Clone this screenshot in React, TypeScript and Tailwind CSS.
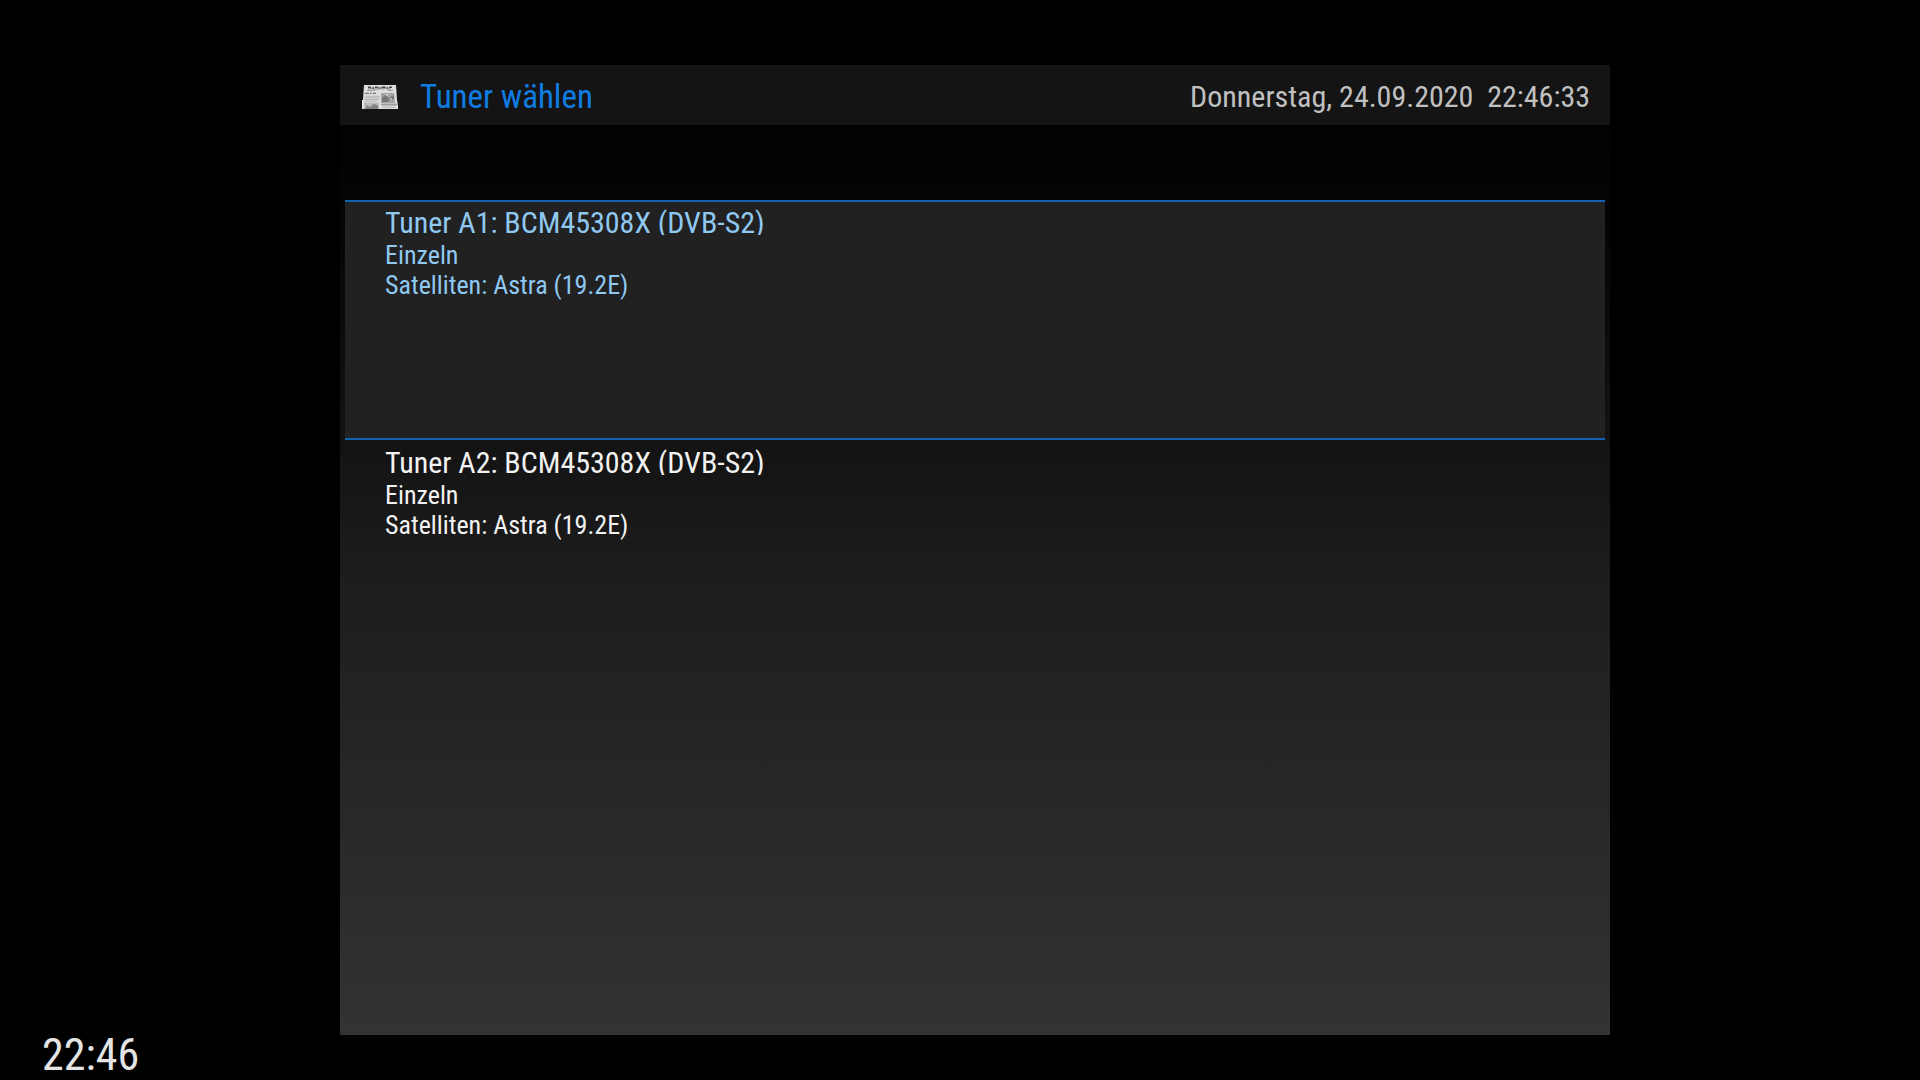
import { useState } from "react";
import clsx from "clsx";

interface Tuner {
  id: string;
  name: string;
  mode: string;
  satellites: string;
}

const TUNERS: Tuner[] = [
  {
    id: "a1",
    name: "Tuner A1: BCM45308X (DVB-S2)",
    mode: "Einzeln",
    satellites: "Satelliten: Astra (19.2E)",
  },
  {
    id: "a2",
    name: "Tuner A2: BCM45308X (DVB-S2)",
    mode: "Einzeln",
    satellites: "Satelliten: Astra (19.2E)",
  },
];

const NewspaperIcon = () => (
  <svg width="36" height="24" viewBox="0 0 36 24" aria-hidden="true">
    <path d="M2 0H34L35 15L36 24H0L0 15H1Z" fill="#dedede" />
    <path d="M0 15L1 15L0.6 23.5H0ZM35 15L36 24H35Z" fill="#f2f2f2" />
    <path
      d="M6 2.2h3M10 3h2M12.8 2.2h3M16.5 3h2M19.5 2.2h4M24.2 3h2M27 2.2h3"
      stroke="#444"
      strokeWidth="1.4"
    />
    <path d="M6 3.8h4M11 4h6M18.5 3.8h5M25 4h4" stroke="#777" />
    <path d="M5 5.6h8M26 5.6h5" stroke="#8b8b8b" strokeWidth="0.8" />
    <path d="M3 8.4h4M8 8.4h2M11 8.4h3" stroke="#777" strokeWidth="1.2" />
    <path
      d="M3 11.2h15M3 12.8h14M2 14.4h16M3 16h12M20 20.5h14M20 22.3h14"
      stroke="#aaa"
      strokeWidth="0.8"
    />
    <path d="M19 8H32L33 18H19Z" fill="#a2a2a2" />
    <path d="M20 17V13L23 10L27 13L32 10V14L28 15L25 17Z" fill="#777" />
    <path d="M22 9h6l-3 2zM26 14l4-1v2z" fill="#c8c8c8" />
    <path d="M2 17.6H17V24H2Z" fill="#bcbcbc" />
    <path d="M3 24L5 20L8 22L12 18.5L16 21V24Z" fill="#858585" />
    <path d="M19 19.2h16" stroke="#858585" />
  </svg>
);

interface TunerRowProps {
  tuner: Tuner;
  selected: boolean;
  onSelect: () => void;
}

const TunerRow = ({ tuner, selected, onSelect }: TunerRowProps) => (
  <li>
    <button
      type="button"
      aria-pressed={selected}
      onClick={onSelect}
      className={clsx(
        "flex h-60 w-full flex-col items-start border-y-2 px-10 pt-1 text-left outline-none",
        selected
          ? "border-[#1262b4] bg-[#212121] text-[#8fc8f0]"
          : "border-transparent text-[#f2f2f2]"
      )}
    >
      <span className="block h-[29px] overflow-hidden text-[30px] leading-[34px]">
        {tuner.name}
      </span>
      <span className="mt-[5px] block text-[26px] leading-[30px]">{tuner.mode}</span>
      <span className="block text-[26px] leading-[30px]">{tuner.satellites}</span>
    </button>
  </li>
);

const App = () => {
  const [selectedId, setSelectedId] = useState<string>("a1");

  return (
    <div className="grid min-h-screen grid-cols-[340px_1fr_310px] bg-black font-['Roboto_Condensed','Liberation_Sans_Narrow',Roboto,sans-serif]">
      <aside className="flex items-end pl-[42px]">
        <time className="text-[44px] leading-[50px] text-[#e4e4e4]">22:46</time>
      </aside>

      <main className="mt-[65px] mb-[45px] flex flex-col">
        <header className="flex h-[60px] items-center justify-between bg-[#141414] pt-1 pr-5 pl-[22px]">
          <div className="flex items-center gap-[22px]">
            <NewspaperIcon />
            <h1 className="text-[33px] leading-10 text-[#107ce2]">Tuner wählen</h1>
          </div>
          <time className="text-[30px] leading-10 whitespace-pre text-[#c0c0c0]">
            {"Donnerstag, 24.09.2020  22:46:33"}
          </time>
        </header>

        <div className="grow bg-linear-to-b from-[#020202] via-[#1d1d1d] to-[#333333] px-[5px] pt-[75px]">
          <ul>
            {TUNERS.map((tuner) => (
              <TunerRow
                key={tuner.id}
                tuner={tuner}
                selected={tuner.id === selectedId}
                onSelect={() => setSelectedId(tuner.id)}
              />
            ))}
          </ul>
        </div>
      </main>
    </div>
  );
};

export default App;
